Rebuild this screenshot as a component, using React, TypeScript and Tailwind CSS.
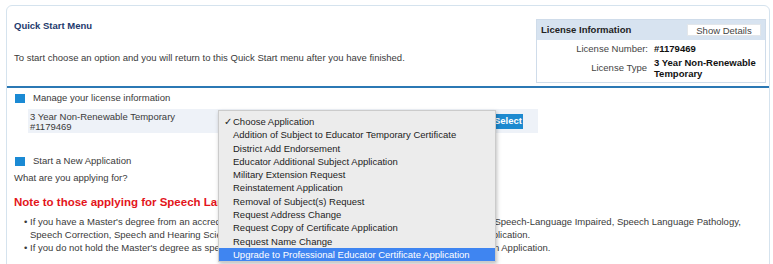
import React from "react";

const items = [
  "Choose Application",
  "Addition of Subject to Educator Temporary Certificate",
  "District Add Endorsement",
  "Educator Additional Subject Application",
  "Military Extension Request",
  "Reinstatement Application",
  "Removal of Subject(s) Request",
  "Request Address Change",
  "Request Copy of Certificate Application",
  "Request Name Change",
  "Upgrade to Professional Educator Certificate Application",
];

export default function App() {
  return (
    <div className="w-[773px] h-[264px] overflow-hidden bg-white font-['Liberation_Sans',Arial,Helvetica,sans-serif] text-[9.5px] text-[#3a3a3a]">
      <div className="relative ml-[6px] mt-[5px] w-[764px] h-[300px] border border-[#d5e3ee] rounded-t-[6px]">
        {/* top area */}
        <div className="flex justify-between h-[80px]">
          <div className="pl-[7px] pt-[14px]">
            <div className="font-bold text-[#1d3a6d] leading-[12px]">Quick Start Menu</div>
            <div className="mt-[20px] leading-[12px]">
              To start choose an option and you will return to this Quick Start menu after you have finished.
            </div>
          </div>
          <div className="mt-[13px] mr-[3px] w-[230px] h-[64px] border border-[#cfdcea] bg-white">
            <div className="h-[20px] bg-[#d7e3f0] flex items-center justify-between pl-[4px] pr-[4px]">
              <span className="font-bold text-[#222]">License Information</span>
              <span className="w-[74px] h-[12px] bg-white border border-[#e2e6ea] text-[#444] leading-[11px] text-center">
                Show Details
              </span>
            </div>
            <div className="pt-[3px] text-[#444]">
              <div className="flex leading-[12px]">
                <span className="w-[111px] text-right">License Number:</span>
                <span className="ml-[6px] font-bold text-[#111]">#1179469</span>
              </div>
              <div className="flex items-center mt-[2px]">
                <span className="w-[110px] text-right">License Type</span>
                <span className="ml-[7px] font-bold text-[#111] leading-[11px]">
                  3 Year Non-Renewable
                  <br />
                  Temporary
                </span>
              </div>
            </div>
          </div>
        </div>
        <div className="h-[2px] bg-[#2b78b4]" />

        {/* manage license */}
        <div className="flex items-center mt-[4px] h-[12px] pl-[8px]">
          <span className="w-[10px] h-[9px] bg-[#1b8ad4]" />
          <span className="ml-[8px]">Manage your license information</span>
        </div>
        <div className="mt-[5px] ml-[21px] w-[510px] h-[24px] bg-[#eef2f8] flex">
          <div className="w-[465px] pl-[2px] pt-[3px] leading-[10px]">
            3 Year Non-Renewable Temporary
            <br />
            #1179469
          </div>
          <div className="mt-[5px] w-[30px] h-[15px] bg-[#1d8ad0] text-white font-bold flex items-center justify-center">
            Select
          </div>
        </div>

        {/* new application */}
        <div className="flex items-center mt-[22px] h-[12px] pl-[8px]">
          <span className="w-[10px] h-[9px] bg-[#1b8ad4]" />
          <span className="ml-[8px]">Start a New Application</span>
        </div>
        <div className="mt-[5px] pl-[7px] leading-[12px]">What are you applying for?</div>
        <div className="mt-[11px] pl-[7px] text-[11.5px] leading-[14px] font-bold text-[#e3151b]">
          Note to those applying for Speech Language Pathology Certification:
        </div>
        <ul className="mt-[6px] pl-[17px] leading-[13px] whitespace-nowrap">
          <li className="flex">
            <span className="w-[6px]">•</span>
            <span>
              If you have a Master's degree from an accredited college program with the certificate of clinical competence in Speech-Language Impaired, Speech Language Pathology,
              <br />
              Speech Correction, Speech and Hearing Science, you will need to submit the Speech Language Pathology Application.
            </span>
          </li>
          <li className="flex">
            <span className="w-[6px]">•</span>
            <span>
              If you do not hold the Master's degree as specified above, you must apply using the Initial Educator Certification Application.
            </span>
          </li>
        </ul>

        {/* dropdown menu */}
        <div className="absolute left-[211px] top-[104px] w-[278px] h-[152px] bg-[#ececec] border border-[#cbcbcb] shadow-[1px_2px_4px_rgba(0,0,0,0.25)] pt-[4px] text-[#1c1c1c]">
          {items.map((it, i) => (
            <div
              key={it}
              className={
                i === items.length - 1
                  ? "flex h-[13.3px] leading-[13.3px] bg-[#3f85f1] text-white"
                  : "flex h-[13.3px] leading-[13.3px]"
              }
            >
              <span className="w-[14px] pl-[5px]">{i === 0 ? "✓" : ""}</span>
              <span>{it}</span>
            </div>
          ))}
        </div>
      </div>
    </div>
  );
}
